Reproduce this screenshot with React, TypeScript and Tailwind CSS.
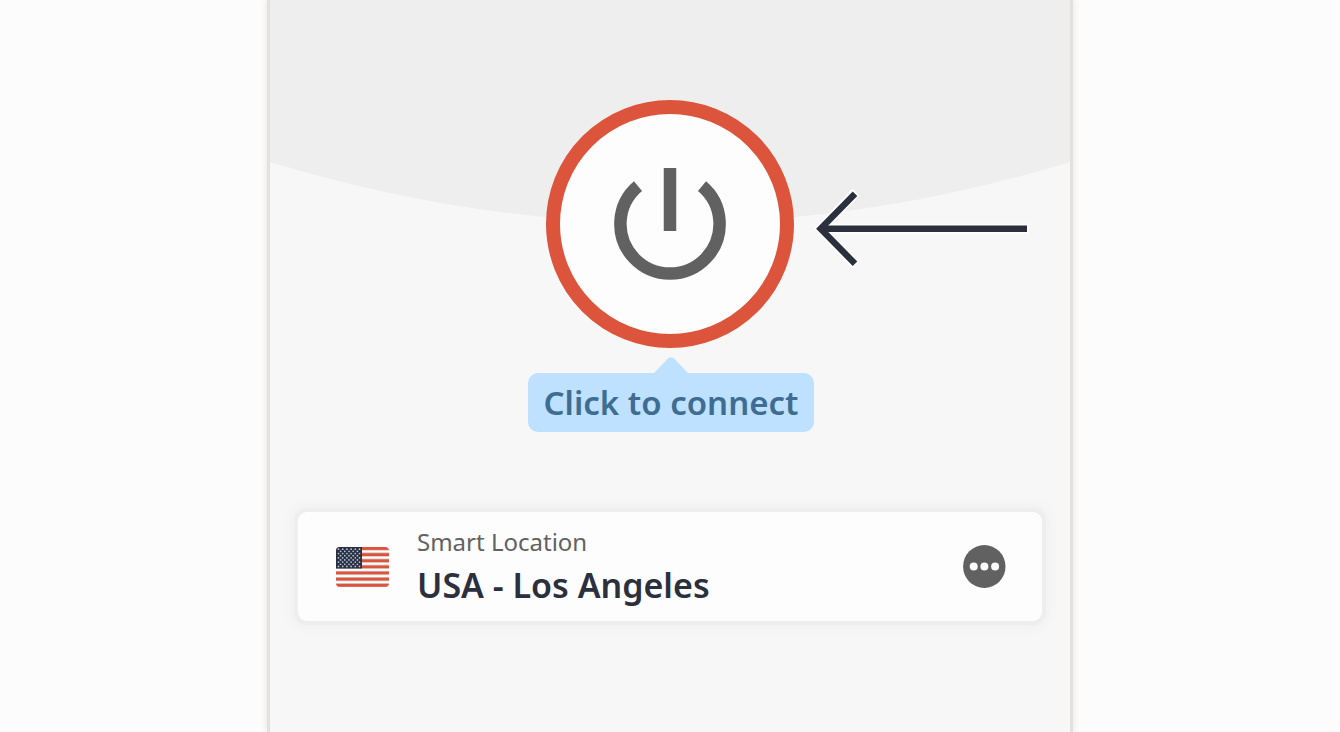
const starRows = [0, 1, 2, 3, 4, 5, 6, 7, 8]
const stripes = [0, 1, 2, 3, 4, 5, 6]

const PowerIcon = () => {
  return <svg viewBox="0 0 112 112" className="w-28 h-28" fill="none" stroke="#616161" strokeWidth="12.5" aria-hidden="true">
    <path d="M24 18.1A49.6 49.6 0 1 0 88 18.1" />
    <path d="M56 0V63" />
  </svg>
}

const FlagIcon = () => {
  return <svg viewBox="0 0 53 40" className="w-[53px] h-10 rounded-[4px]" role="img" aria-label="USA">
    <rect width="53" height="40" fill="#fdfdfd" />
    {stripes.map((i) => (
      <g key={i}>
        <rect y={i * 6.15 - 0.7} width="53" height="0.9" fill="#c4bcbc" />
        <rect y={i * 6.15} width="53" height="3.1" fill="#dd543c" />
        <rect y={i * 6.15 + 2.9} width="53" height="0.6" fill="#dcc6c2" />
      </g>
    ))}
    <rect width="26" height="21.5" fill="#2b3040" />
    {starRows.map((row) =>
      (row % 2 ? [0, 1, 2, 3, 4] : [0, 1, 2, 3, 4, 5]).map((col) => (
        <circle key={`${row}-${col}`} cx={2.5 + col * 4.2 + (row % 2) * 2.1} cy={2.2 + row * 2.15} r="0.85" fill="#b5cde0" />
      ))
    )}
  </svg>
}

const PointerArrow = () => {
  return <svg viewBox="0 0 216 80" className="absolute left-full top-[89px] ml-5 w-[216px] h-20" fill="none" aria-hidden="true">
    <g stroke="#ffffff" strokeWidth="10">
      <path d="M42 3L7 39.7L42 76.4" />
      <path d="M10 39.7H215" />
    </g>
    <g stroke="#2b2f3e" strokeWidth="6.4">
      <path d="M41 4.7L6.6 39.7L41 74.7" />
      <path d="M8 39.7H213" />
    </g>
  </svg>
}

const Hint = () => {
  return <div className="flex flex-col items-center mt-[9px] pl-0.5">
    <svg viewBox="0 0 34 16" className="w-[34px] h-4" aria-hidden="true">
      <path d="M0 16L14 1.5Q17 -1 20 1.5L34 16Z" fill="#bde1ff" />
    </svg>
    <p className="rounded-[10px] bg-[#bde1ff] px-4 h-[59px] leading-[60px] text-[33px] font-semibold text-[#3f6c92] whitespace-nowrap">
      Click to connect
    </p>
  </div>
}

const LocationCard = () => {
  return <section className="mt-20 mx-7 flex items-center rounded-[9px] bg-[#fdfdfd] pl-[38px] pr-9 h-[109px] shadow-[0_0_0_4px_#eeeeee,0_0_8px_8px_#f1f1f1]">
    <FlagIcon />
    <div className="ml-7 flex-1">
      <p className="text-2xl leading-9 text-[#616161]">Smart Location</p>
      <h2 className="text-[34px] leading-[50px] font-semibold text-[#2b2f3e]">USA - Los Angeles</h2>
    </div>
    <button type="button" aria-label="Choose location" className="cursor-pointer">
      <svg viewBox="0 0 43 44" className="w-[43px] h-11" aria-hidden="true">
        <ellipse cx="21.3" cy="21.5" rx="21.2" ry="21.5" fill="#616161" />
        <g fill="#fdfdfd">
          <circle cx="10.7" cy="21.6" r="4" />
          <circle cx="21.4" cy="21.6" r="4" />
          <circle cx="32.1" cy="21.6" r="4" />
        </g>
      </svg>
    </button>
  </section>
}

export default function App() {
  return <div className="min-h-screen bg-[#fcfcfc] font-['Noto_Sans','Open_Sans',sans-serif]">
    <main className="relative mx-auto min-h-screen w-full max-w-[806px] border-x-3 border-[#e2e1e0] bg-[#f7f7f7] shadow-[0_0_6px_1px_#e9e9e9]">
      <svg viewBox="0 0 800 224" preserveAspectRatio="none" className="absolute inset-x-0 top-0 w-full h-56" aria-hidden="true">
        <path d="M0 0H800V162Q400 284 0 162Z" fill="#eeeeee" />
      </svg>
      <div className="relative pt-[100px]">
        <div className="relative mx-auto w-fit">
          <button type="button" aria-label="Connect" className="flex size-[248px] items-center justify-center rounded-full border-14 border-[#dd543c] bg-[#fdfdfd] cursor-pointer">
            <PowerIcon />
          </button>
          <PointerArrow />
        </div>
        <Hint />
        <LocationCard />
      </div>
    </main>
  </div>
}
